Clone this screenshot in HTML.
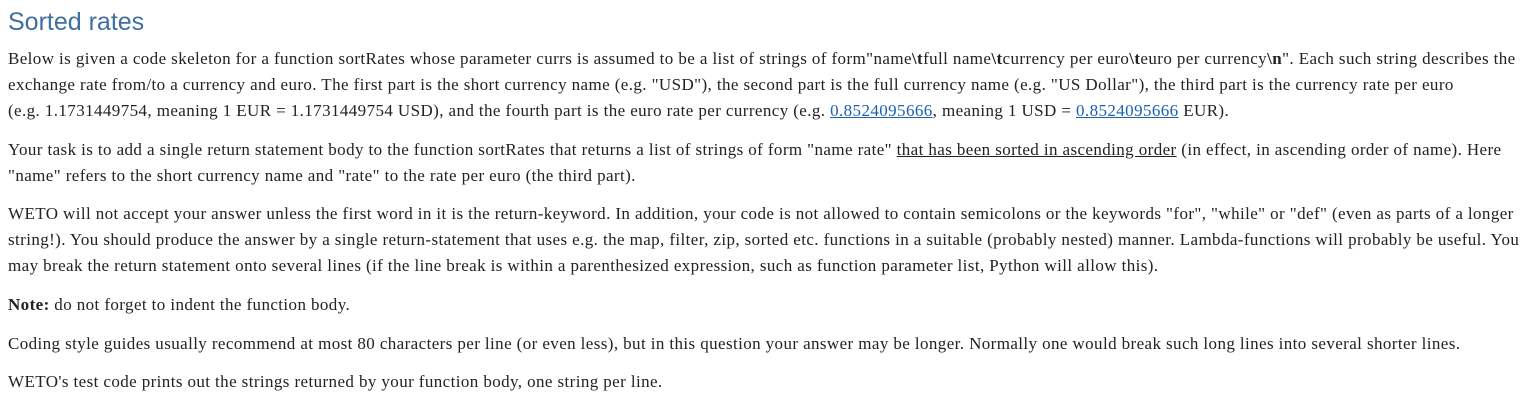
<!DOCTYPE html>
<html><head><meta charset="utf-8"><style>
html,body{margin:0;padding:0;background:#fff;width:1535px;height:404px;overflow:hidden}
body{font-family:"Liberation Serif",serif;font-size:17px;letter-spacing:0.4px;color:#222;padding-left:8px}
h1{font-family:"Liberation Sans",sans-serif;font-weight:normal;font-size:25px;letter-spacing:0;color:#3f6f9f;margin:0;padding-top:7px;height:39px;line-height:30px}
p{margin:0 0 12.7px 0;line-height:26px;white-space:nowrap}
a{color:#1a5fb4;text-decoration:underline}
u{text-decoration:underline}
</style></head><body>
<h1>Sorted rates</h1>
<p>Below is given a code skeleton for a function sortRates whose parameter currs is assumed to be a list of strings of form"name<b>\t</b>full name<b>\t</b>currency per euro<b>\t</b>euro per currency<b>\n</b>". Each such string describes the<br>exchange rate from/to a currency and euro. The first part is the short currency name (e.g. "USD"), the second part is the full currency name (e.g. "US Dollar"), the third part is the currency rate per euro<br>(e.g. 1.1731449754, meaning 1 EUR = 1.1731449754 USD), and the fourth part is the euro rate per currency (e.g. <a>0.8524095666</a>, meaning 1 USD = <a>0.8524095666</a> EUR).</p>
<p>Your task is to add a single return statement body to the function sortRates that returns a list of strings of form "name rate" <u>that has been sorted in ascending order</u> (in effect, in ascending order of name). Here<br>"name" refers to the short currency name and "rate" to the rate per euro (the third part).</p>
<p>WETO will not accept your answer unless the first word in it is the return-keyword. In addition, your code is not allowed to contain semicolons or the keywords "for", "while" or "def" (even as parts of a longer<br>string!). You should produce the answer by a single return-statement that uses e.g. the map, filter, zip, sorted etc. functions in a suitable (probably nested) manner. Lambda-functions will probably be useful. You<br>may break the return statement onto several lines (if the line break is within a parenthesized expression, such as function parameter list, Python will allow this).</p>
<p><b>Note:</b> do not forget to indent the function body.</p>
<p>Coding style guides usually recommend at most 80 characters per line (or even less), but in this question your answer may be longer. Normally one would break such long lines into several shorter lines.</p>
<p>WETO's test code prints out the strings returned by your function body, one string per line.</p>
</body></html>
